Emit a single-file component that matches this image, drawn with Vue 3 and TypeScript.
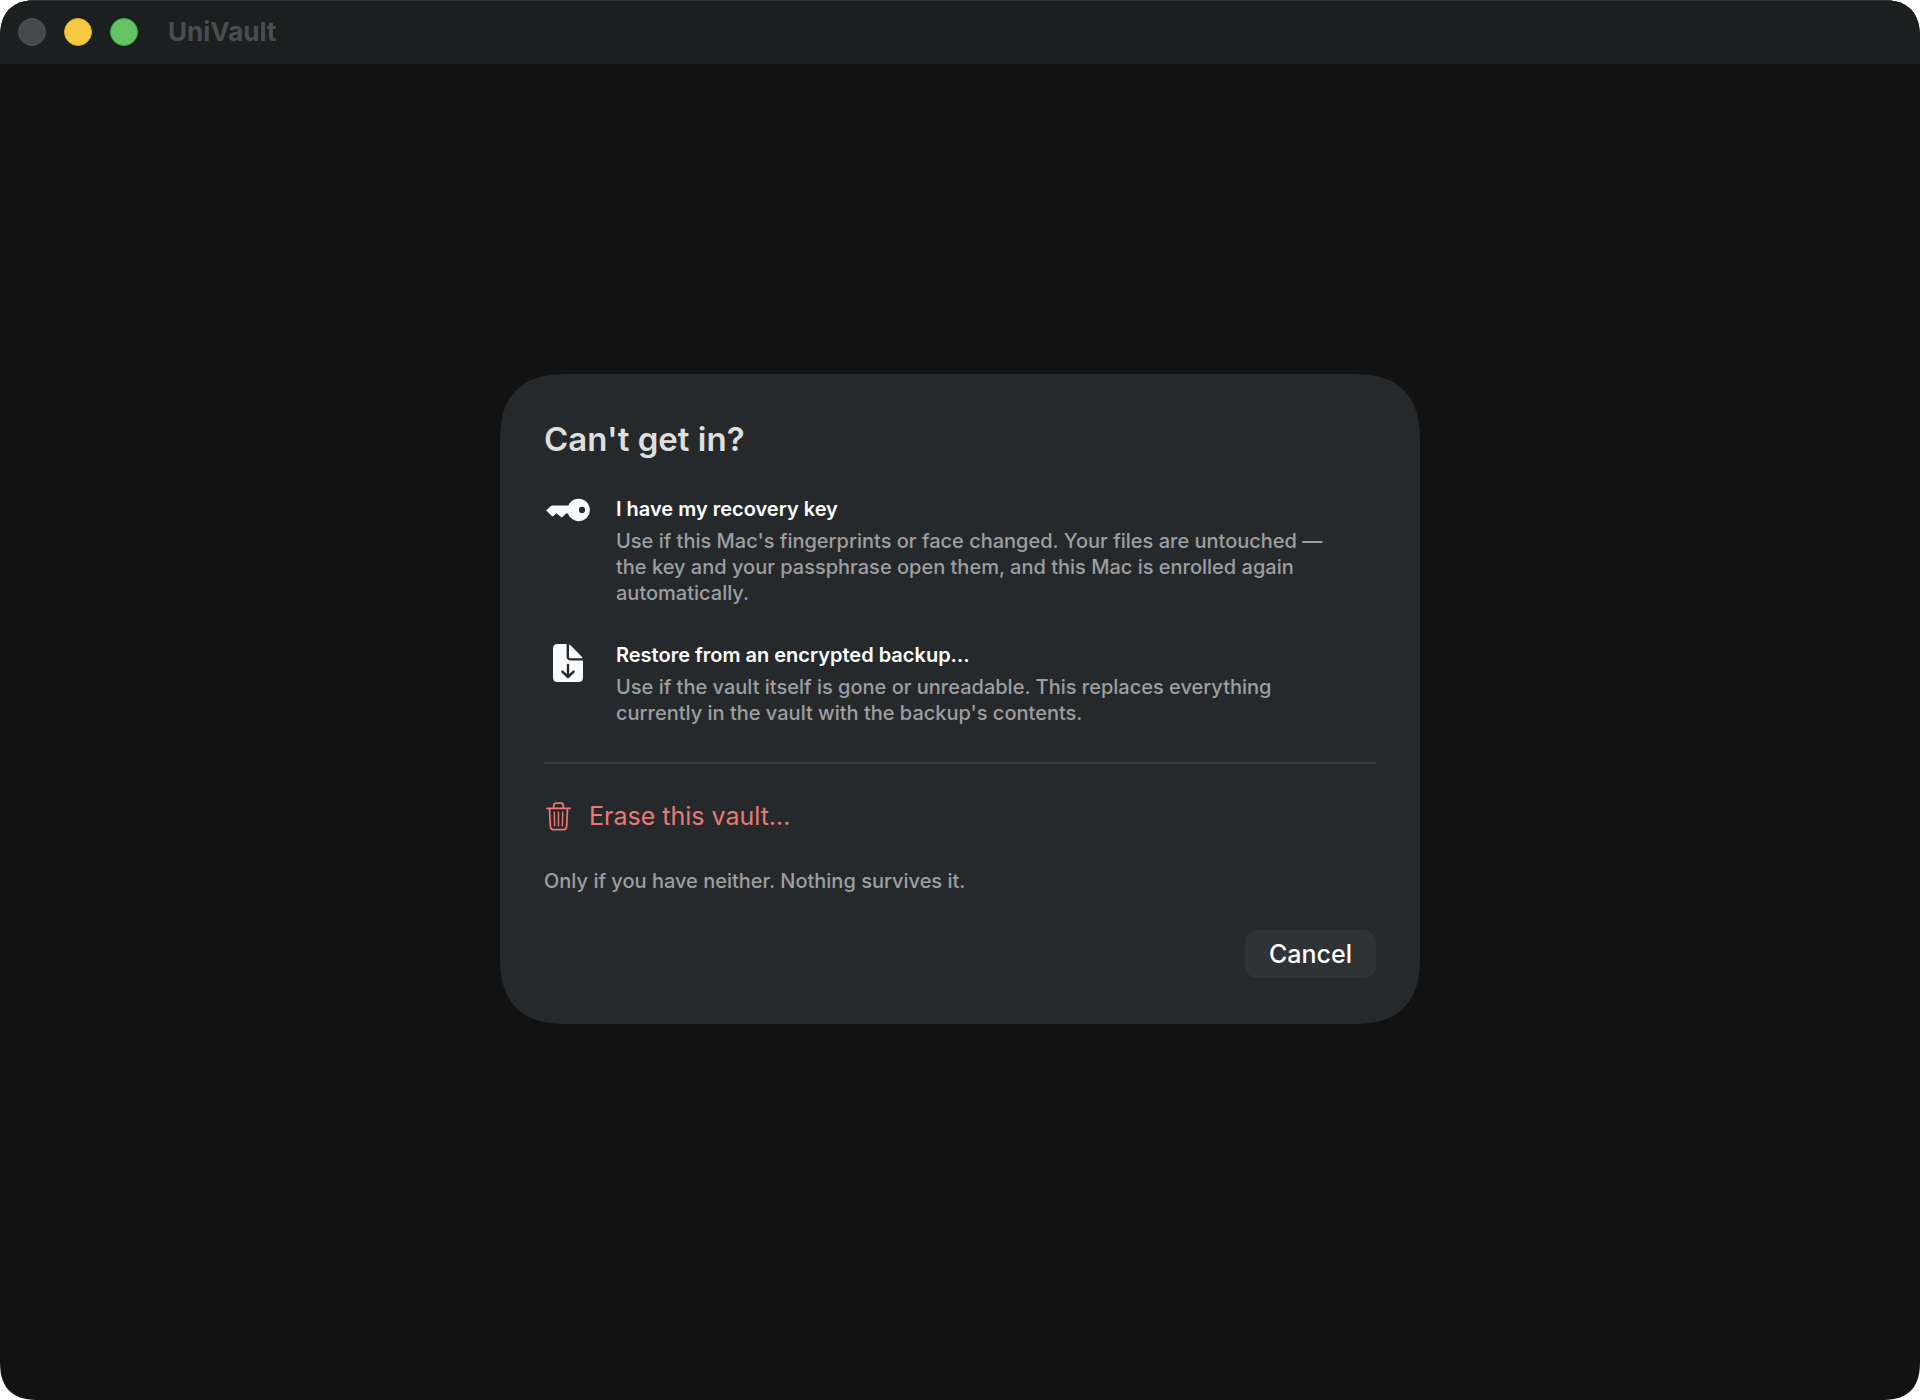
<script setup lang="ts">
interface RecoveryOption {
  id: string
  icon: 'key' | 'document'
  title: string
  detail: string
}

const windowControls = ['close', 'minimize', 'zoom']

const options: RecoveryOption[] = [
  {
    id: 'recovery-key',
    icon: 'key',
    title: 'I have my recovery key',
    detail:
      "Use if this Mac's fingerprints or face changed. Your files are untouched — the key and your passphrase open them, and this Mac is enrolled again automatically.",
  },
  {
    id: 'restore-backup',
    icon: 'document',
    title: 'Restore from an encrypted backup…',
    detail:
      "Use if the vault itself is gone or unreadable. This replaces everything currently in the vault with the backup's contents.",
  },
]
</script>

<template>
  <div class="window">
    <header class="titlebar">
      <div class="controls">
        <button
          v-for="name in windowControls"
          :key="name"
          type="button"
          class="light"
          :class="name"
          :aria-label="name"
        ></button>
      </div>
      <span class="app-name">UniVault</span>
    </header>

    <main class="content">
      <section class="sheet" role="dialog" aria-labelledby="sheet-title">
        <h1 id="sheet-title" class="heading">Can't get in?</h1>

        <div class="options">
          <button v-for="option in options" :key="option.id" type="button" class="option">
            <span class="option-icon">
              <svg v-if="option.icon === 'key'" width="44" height="24" viewBox="0 0 44 24" aria-hidden="true">
                <path
                  fill="#fafafa"
                  fill-rule="evenodd"
                  d="M22.4 7.4H6.6Q5.6 7.4 4.9 8.1L.6 11.9Q.1 12.4.6 12.9L5.9 18Q6.7 18.5 7.4 18L10.4 15.2 15 18.9Q15.8 19.4 16.6 18.9L20 15.4H22A11.2 11.2 0 1 0 22.4 7.4ZM36 8.8A3.1 3.1 0 1 1 36 15A3.1 3.1 0 1 1 36 8.8Z"
                />
              </svg>
              <svg v-else width="30" height="38" viewBox="0 0 30 38" aria-hidden="true">
                <path
                  fill="#fafafa"
                  d="M4.5 0H13.6V12.6Q13.6 16.4 17.4 16.4H30V33.5Q30 38 25.5 38H4.5Q0 38 0 33.5V4.5Q0 0 4.5 0Z"
                />
                <path fill="#fafafa" d="M16 .4Q17 .8 17.8 1.6L28.6 12.4Q29.5 13.3 29.8 14.2H17.2Q16 14.2 16 13Z" />
                <path
                  fill="none"
                  stroke="#25292c"
                  stroke-width="2.4"
                  stroke-linecap="round"
                  stroke-linejoin="round"
                  d="M15 21V33M9.4 27.6L15 33.2L20.6 27.6"
                />
              </svg>
            </span>
            <span class="option-text">
              <span class="option-title">{{ option.title }}</span>
              <span class="option-detail">{{ option.detail }}</span>
            </span>
          </button>
        </div>

        <hr class="divider" />

        <button type="button" class="erase">
          <svg width="25" height="29" viewBox="0 0 26 30" aria-hidden="true">
            <g fill="none" stroke="#e87a74" stroke-width="1.8" stroke-linecap="round" stroke-linejoin="round">
              <path d="M1 6.6H25" />
              <path d="M8 6.4V3.8Q8 1.2 10.6 1.2H15.4Q18 1.2 18 3.8V6.4" />
              <path d="M3.6 7L4.6 25.6Q4.8 28.6 7.6 28.6H18.4Q21.2 28.6 21.4 25.6L22.4 7" />
              <path stroke-width="1.5" d="M8.6 10.6L9 24.6M13 10.6V24.6M17.4 10.6L17 24.6" />
            </g>
          </svg>
          <span>Erase this vault…</span>
        </button>

        <p class="note">Only if you have neither. Nothing survives it.</p>

        <footer class="actions">
          <button type="button" class="cancel">Cancel</button>
        </footer>
      </section>
    </main>
  </div>
</template>

<style>
body {
  margin: 0;
  background: #ffffff;
}
</style>

<style scoped>
.window {
  display: flex;
  flex-direction: column;
  min-height: 100vh;
  overflow: hidden;
  border-radius: 32px;
  background: #121212;
  color: #ffffff;
  font-family: Inter, 'Liberation Sans', sans-serif;
}

button {
  margin: 0;
  padding: 0;
  border: 0;
  background: none;
  color: inherit;
  font: inherit;
  text-align: left;
}

.titlebar {
  display: flex;
  align-items: center;
  gap: 30px;
  box-sizing: border-box;
  height: 64px;
  padding: 0 18px;
  background: #1b1f20;
  box-shadow: inset 0 1px 0 #2e3233;
}

.controls {
  display: flex;
  gap: 18px;
}

.light {
  box-sizing: border-box;
  width: 28px;
  height: 28px;
  border: 1px solid #505356;
  border-radius: 50%;
  background: #46494c;
}

.light.minimize {
  border-color: #e0ac1c;
  background: #f5c944;
}

.light.zoom {
  border-color: #37ac3c;
  background: #65c466;
}

.app-name {
  color: #4a4d4f;
  font-size: 26px;
  font-weight: 700;
  line-height: 32px;
}

.content {
  display: flex;
  flex: 1;
  align-items: center;
  justify-content: center;
  padding-bottom: 66px;
}

.sheet {
  display: flex;
  flex-direction: column;
  box-sizing: border-box;
  width: 100%;
  max-width: 920px;
  padding: 44px 44px 46px;
  border-radius: 54px;
  background: #25292c;
}

@supports (corner-shape: superellipse(1.5)) {
  .window {
    border-radius: 40px;
    corner-shape: superellipse(1.4);
  }

  .sheet {
    border-radius: 70px;
    corner-shape: superellipse(1.4);
  }
}

.heading {
  margin: 0 0 36px;
  color: #dededf;
  font-size: 33px;
  font-weight: 600;
  line-height: 42px;
}

.options {
  display: flex;
  flex-direction: column;
  gap: 36px;
}

.option {
  display: flex;
  align-items: flex-start;
  gap: 24px;
}

.option-icon {
  display: flex;
  flex: none;
  justify-content: center;
  width: 48px;
  padding-top: 2px;
}

.option-text {
  display: flex;
  flex-direction: column;
  gap: 6px;
  padding-right: 36px;
}

.option-title {
  font-size: 20px;
  font-weight: 600;
  line-height: 26px;
}

.option-detail,
.note {
  color: #9d9fa0;
  font-size: 20px;
  font-weight: 500;
  line-height: 26px;
}

.divider {
  width: 100%;
  height: 2px;
  margin: 36px 0;
  border: 0;
  background: #3a3e40;
}

.erase {
  display: flex;
  align-items: center;
  align-self: flex-start;
  gap: 18px;
  padding-left: 2px;
  color: #e87a74;
  font-size: 25px;
  line-height: 32px;
}

.erase svg {
  flex: none;
}

.note {
  margin: 36px 0;
}

.actions {
  display: flex;
  justify-content: flex-end;
}

.cancel {
  height: 48px;
  padding: 0 24px;
  border-radius: 12px;
  background: #303336;
  font-size: 25px;
  font-weight: 500;
  line-height: 48px;
  text-align: center;
}
</style>
